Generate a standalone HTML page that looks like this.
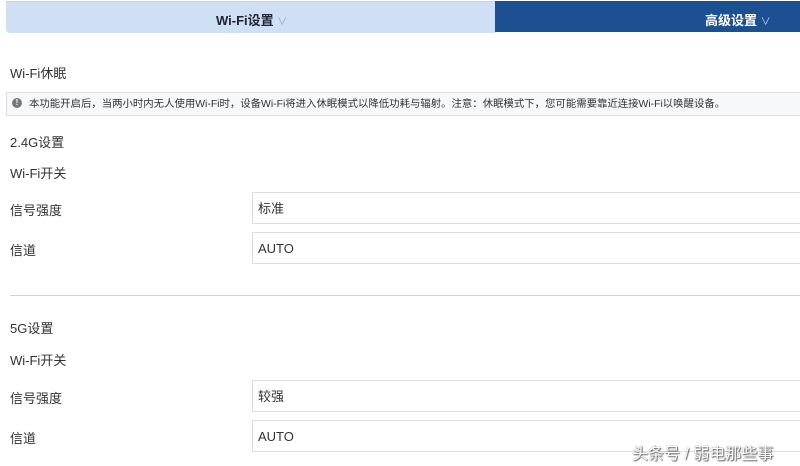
<!DOCTYPE html>
<html><head><meta charset="utf-8"><style>
body{margin:0;width:800px;height:466px;background:#fff;position:relative;overflow:hidden;font-family:"Liberation Sans","Noto Sans CJK SC",sans-serif;color:#333;font-size:13px}
.a{position:absolute}
.t{position:absolute;left:10px;line-height:16px;transform:translateY(-7px)}
.in{position:absolute;left:252px;width:560px;height:30px;border:1px solid #ddd;box-sizing:border-box;padding-left:5px;line-height:31px}
</style></head><body>
<div class="a" style="left:6px;top:1px;width:489px;height:31px;background:#cfe0f6;border-top:1px solid #c4d6ee;border-radius:0 0 0 4px"></div>
<div class="a" style="left:495px;top:1px;width:305px;height:31px;background:#1d4f93"></div>
<div class="a" style="left:216px;top:10px;font-weight:bold;color:#223;font-size:13px">Wi-Fi设置 <span style="font-weight:normal;color:#8aa;font-size:10px">∨</span></div>
<div class="a" style="left:705px;top:10px;font-weight:bold;color:#fff;font-size:13px">高级设置 <span style="font-weight:normal;color:#cde;font-size:10px">∨</span></div>
<div class="t" style="top:73px">Wi-Fi休眠</div>
<div class="a" style="left:6px;top:92px;width:800px;height:24px;border:1px solid #ddd;box-sizing:border-box;background:#f6f8fb;font-size:10.4px;line-height:23px;padding-left:22px;color:#333">本功能开启后，当两小时内无人使用Wi-Fi时，设备Wi-Fi将进入休眠模式以降低功耗与辐射。注意：休眠模式下，您可能需要靠近连接Wi-Fi以唤醒设备。</div>
<div class="a" style="left:12px;top:98px;width:10px;height:10px;border-radius:50%;background:#777;color:#fff;font-size:8px;line-height:10px;text-align:center;font-weight:bold">!</div>
<div class="t" style="top:142px">2.4G设置</div>
<div class="t" style="top:173px">Wi-Fi开关</div>
<div class="t" style="top:210px">信号强度</div>
<div class="t" style="top:250px">信道</div>
<div class="in" style="top:192px;height:32px">标准</div>
<div class="in" style="top:232px;height:32px">AUTO</div>
<div class="a" style="left:10px;top:295px;width:790px;height:1px;background:#ccd3dc"></div>
<div class="t" style="top:328px">5G设置</div>
<div class="t" style="top:360px">Wi-Fi开关</div>
<div class="t" style="top:398px">信号强度</div>
<div class="t" style="top:438px">信道</div>
<div class="in" style="top:380px;height:32px">较强</div>
<div class="in" style="top:420px;height:32px">AUTO</div>
<div class="a" style="left:632px;top:440px;font-size:16px;color:#fff;text-shadow:0 0 1px #555,1px 1px 1px #666">头条号 / 弱电那些事</div>
</body></html>
